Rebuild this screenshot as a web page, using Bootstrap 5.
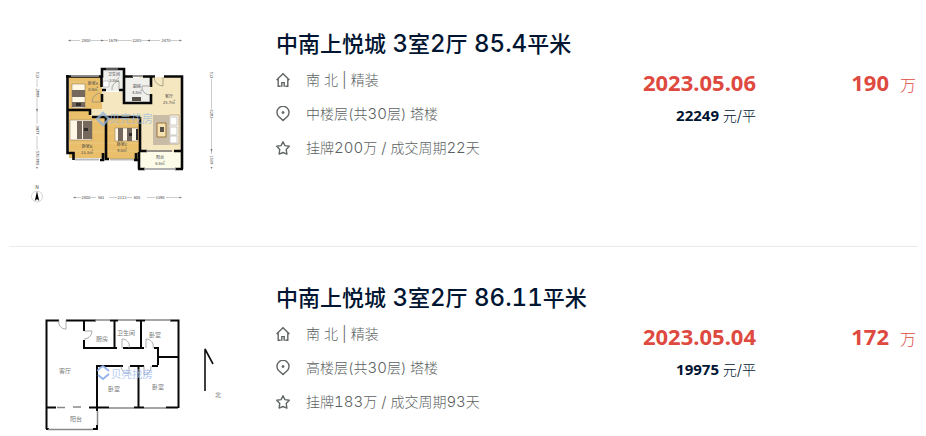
<!DOCTYPE html>
<html lang="zh-CN">
<head>
<meta charset="utf-8">
<meta name="viewport" content="width=device-width, initial-scale=1">
<title>中南上悦城 成交记录</title>
<link href="https://cdn.jsdelivr.net/npm/bootstrap@5.3.0/dist/css/bootstrap.min.css" rel="stylesheet">
<style>
  body { font-family: Inter, "Noto Sans CJK SC", sans-serif; font-variant-numeric: tabular-nums; color: #001532; background: #fff; }
  .deals { padding: 0 8px 0 9px; }
  .deal { padding: 36px 0; border-bottom: 1px solid #ebebeb; }
  .deal:first-child { padding-top: 29px; }
  .deal:last-child { padding-bottom: 0; border-bottom: 0; }
  .plan { width: 240px; margin-right: 27px; }
  .plan svg { display: block; width: 100%; }
  .plan text { font-family: "Noto Sans CJK SC", sans-serif; text-anchor: middle; fill: #444; }
  .plan .outline-names text { fill: #777; }
  .deal-title { font-size: 22px; line-height: 30px; height: 30px; font-weight: 500; }
  .deal-title a { color: inherit; }
  .deal-title span { font-size: 24px; }
  .facts { font-size: 14px; line-height: 34px; color: #5b5f5f; font-weight: 300; }
  .facts li { gap: 16px; height: 34px; }
  .facts li span { font-size: 15px; }
  .facts svg { width: 14px; height: 16px; fill: none; stroke: #626666; stroke-width: 1.4; }
  .closing, .total { padding-top: 36px; color: #de4a3f; line-height: 34px; }
  .figure-big { font-family: "Noto Sans", sans-serif; font-size: 22px; font-weight: 700; }
  .unit-price { font-size: 14px; line-height: 32px; color: #001532; font-weight: 300; }
  .unit-price b { font-family: "Noto Sans", sans-serif; font-size: 15px; font-weight: 700; }
  .unit-price span { font-size: 15px; }
  .total { width: 160px; font-size: 16px; font-weight: 300; }
  .total b { margin-right: 11px; }
  .closing, .total { position: relative; margin-right: 0; }
  .deal { padding-right: 2px; }
</style>
<script src="https://cdn.jsdelivr.net/npm/bootstrap@5.3.0/dist/js/bootstrap.bundle.min.js" defer></script>
</head>
<body>
<svg class="d-none" aria-hidden="true">
  <symbol id="i-home" viewBox="0 0 14 16"><path d="M.6 8 7 1.700 13.400 8M2.200 6.600v7.700h2.500M11.800 6.600v7.700H9.300M5.800 14.800v-4.200h2.400v4.200"/></symbol>
  <symbol id="i-pin" viewBox="0 0 14 16"><path d="M7 14.600 2.400 10.200a6 6 0 1 1 9.200 0Z"/><circle cx="7" cy="6.500" r="1" fill="#626666" stroke-width="1"/></symbol>
  <symbol id="i-star" viewBox="0 0 14 16"><path d="m7 1.700 1.900 3.900 4.400.7-3.100 3.100.7 4.700L7 12.500l-3.900 1.600.7-4.700L.7 6.300l4.400-.7Z" stroke-linejoin="round"/></symbol>
</svg>
<main class="deals">
  <article class="deal d-flex align-items-start">
    <a class="plan flex-shrink-0" href="#" aria-label="三室两厅户型图">
      <svg viewBox="9 29 240 181">
        <!-- floors -->
        <path fill="#f5e7c0" d="M89 92h50v-15h43v75h-42v-35H90z"/>
        <path fill="#e9bf6c" d="M69 77h33v32H69zM69 111h21v5h15v42H69zM107 118h32v41h-32z"/>
        <path fill="#efefec" d="M103 70h20v21h-20zM125 78h25v24h-25z"/>
        <path fill="#fcfce9" d="M140 152h42v17h-42z"/>
        <path stroke="#f0d292" stroke-width=".6" d="M69 82h33M69 89h33M69 97h19M69 104h19M69 121h36M69 132h36M69 143h36M69 151h36M107 124h32M107 133h32M107 143h32M107 151h32"/>
        <!-- beds, sofa and fixtures -->
        <path fill="#fff8e7" stroke="#9c8568" stroke-width=".6" d="M72 84h13v24H72zM70 120h22v20H70zM115 128h23v13h-23zM169 115h10v29h-10z"/>
        <path fill="#75695d" d="M72 90h13v7H72zM72 102h13v5H72zM77 121h5v18h-5zM83 121h9v18h-9zM118 128h5v13h-5zM127 128h5v13h-5z"/>
        <path fill="#302d2c" d="M76 103h5v3h-5zM84 128h4v3h-4zM129 133h3v3h-3zM136 129h2v11h-2z"/>
        <path fill="#c9bca6" d="M153 115h16v30h-16z"/>
        <path fill="#f4e2b1" stroke="#9b743e" stroke-width="1" d="M157 123h9v14h-9z"/>
        <path fill="#59524b" d="M160 127h4v5h-4zM132 97h9v4h-9z"/>
        <path fill="#fff" stroke="#aaa" stroke-width=".6" d="M103 81h6v6h-6zM170 117h7v8h-7zM170 127h7v8h-7zM170 136h7v7h-7z"/>
        <!-- walls -->
        <path fill="none" stroke="#080808" stroke-width="2.600" d="M67.500 75v78h6v7M66 76.500h36V69h22v7M124 69v34h27V94M151 87V77M133 76.500h-9M143 76.500h12M164 76.500h18V169M67 110h23v5M101.500 76v11M102 94v8M102 90h4M119 90h5M92 117h48M106 117v35M100 160h3v-7M106 152v7h3M140 117v35M136 160v-7M139 152v17M134 160h5M140 151h7M174 151h8M138 169h7M175 169h8"/>
        <path stroke="#777" stroke-width="1.600" d="M71 76h28M106 69h12M132 76h11M75 159.500h24M110 159.500h24M146 151h26M144 169h32"/>
        <path stroke="#fff" stroke-width=".5" d="M71 76h28M75 159.500h24M110 159.500h24M144 169h32"/>
        <path fill="none" stroke="#8c8c80" stroke-width=".7" d="M101 93a9 9 0 0 0-9 9h9M112 90a8 8 0 0 1 7-9v9M151 86h-9a8 8 0 0 0 8 9M154 77a9 9 0 0 0 9 9v-9"/>
        <!-- agency stamp -->
        <path fill="none" stroke="#91b4d9" stroke-width="2.500" opacity=".75" d="m97 119 6-6 6 6-6 6Z"/>
        <text x="131" y="123" font-size="11" style="fill:#9abce0" opacity=".75">贝壳找房</text>
        <!-- room names -->
        <g font-size="4">
          <text x="93" y="85">卧室A</text><text x="93" y="91">8.9㎡</text>
          <text x="114" y="76">卫生间</text><text x="114" y="82">3.8㎡</text>
          <text x="137" y="88">厨房</text><text x="137" y="94">4.8㎡</text>
          <text x="169" y="98">客厅</text><text x="169" y="104">25.7㎡</text>
          <text x="87" y="148">卧室B</text><text x="87" y="154">13.3㎡</text>
          <text x="122" y="146">卧室C</text><text x="122" y="152">9.8㎡</text>
          <text x="160" y="159">阳台</text><text x="160" y="165">6.8㎡</text>
        </g>
        <!-- dimensions -->
        <path fill="none" stroke="#999" stroke-width=".5" d="M69 40.500h11M91 40.500h17M118 40.500h14M142 40.500h18M171 40.500h9M74 197.500h7M91 197.500h5M109 197.500h8M127 197.500h5M147 197.500h8M166 197.500h14M37 79v8M37 98v26M37 136v14M211.500 79v30M211.500 119v35"/>
        <path fill="#777" d="m68 40.500 2.500-1v2zM182 40.500l-2.500-1v2zM73 197.500l2.500-1v2zM182 197.500l-2.500-1v2zM101 39.500l3 1-3 1zM150 39.500l-3 1 3 1zM36 109h2l-1 3zM36 167h2l-1 2zM210.500 167h2l-1 2zM210.500 149h2l-1 3z"/>
        <g font-size="4">
          <text x="86" y="42">2800</text><text x="113" y="42">1679</text><text x="137" y="42">2205</text><text x="166" y="42">2470</text>
          <text x="86" y="199">2800</text><text x="101" y="199">561</text><text x="122" y="199">2113</text><text x="137" y="199">605</text><text x="160" y="199">3398</text>
          <text transform="translate(36 75) rotate(90)">513</text><text transform="translate(36 93) rotate(90)">2888</text><text transform="translate(36 130) rotate(90)">3477</text><text transform="translate(36 158) rotate(90)">576 889</text>
          <text transform="translate(210 75) rotate(90)">513</text><text transform="translate(210 114) rotate(90)">6283</text><text transform="translate(210 160) rotate(90)">1508</text>
          <text x="37" y="189" font-size="5">N</text>
        </g>
        <circle cx="37" cy="196.500" r="5.500" fill="#fff" stroke="#bbb" stroke-width=".6"/><path d="m37 191 2.200 10-2.200-2-2.200 2z"/>
      </svg>
    </a>
    <div class="flex-grow-1">
      <h2 class="deal-title mb-1"><a class="text-decoration-none" href="#">中南上悦城<span> 3</span>室<span>2</span>厅<span> 85.4</span>平米</a></h2>
      <ul class="facts list-unstyled mb-0">
        <li class="d-flex align-items-center"><svg aria-hidden="true"><use href="#i-home"/></svg><div>南<span> </span>北<span> | </span>精装</div></li>
        <li class="d-flex align-items-center"><svg aria-hidden="true"><use href="#i-pin"/></svg><div>中楼层(共<span>30</span>层) 塔楼</div></li>
        <li class="d-flex align-items-center"><svg aria-hidden="true"><use href="#i-star"/></svg><div>挂牌<span>200</span>万<span> / </span>成交周期<span>22</span>天</div></li>
      </ul>
    </div>
    <div class="closing text-end">
      <div class="figure-big">2023.05.06</div>
      <div class="unit-price"><b>22249</b> 元<span>/</span>平</div>
    </div>
    <div class="total text-end"><b class="figure-big">190</b>万</div>
  </article>

  <article class="deal d-flex align-items-start">
    <a class="plan flex-shrink-0" href="#" aria-label="三室两厅户型图">
      <svg viewBox="9 283 240 150">
        <path fill="none" stroke="#080808" stroke-width="2" d="M59 320.500H46.500V429M66 320.500h30M110 320.500h8M136 320.500h9M170 320.500h8.500V408M84 321v10M84 340v8h33M114.500 320v28M123 348h21M141 321v27M154 348h4v17M158 357h20M97 408v-42h26M130 366h14M152 366h6M138.500 366v42M97 407.500h12M134 407.500h10M166 407.500h12M46 407.500h10M89 407.500h8V411M46 429h3M93 429h4v-4"/>
        <path fill="none" stroke="#888" stroke-width="1.500" d="M95 320h15M118 320h18M145 320h26M109 408h25M144 408h22M57 407.500h8M73 407h8M97.500 411v14M48 429.500h45"/>
        <path fill="none" stroke="#888" stroke-width=".7" d="M59 320a7 7 0 0 0 7 9v-9M84 331h8a8 8 0 0 1-8 8M122 348v-9a7 7 0 0 1 7 9M146 348v-9a7 7 0 0 1 7 9M121 366a8 8 0 0 0 8 8v-8M144 366v9a8 8 0 0 0 7-9"/>
        <path fill="none" stroke="#91b2eb" stroke-width="1.800" d="m97.500 371 2.500-3 3-2 6 5M109 374l-6 5-5-4"/>
        <text x="132" y="378" font-size="10.500" style="fill:#a9c1f1" opacity=".85">贝壳找房</text>
        <g class="outline-names" font-size="6">
          <text x="102" y="341">厨房</text><text x="126" y="335">卫生间</text><text x="155" y="337">卧室</text>
          <text x="65" y="373">客厅</text><text x="114" y="391">卧室</text><text x="158" y="389">卧室</text>
          <text x="76" y="421">阳台</text><text x="218" y="397">北</text>
        </g>
        <path fill="none" stroke="#111" stroke-width="1.600" d="M205 391v-42l8 15"/>
      </svg>
    </a>
    <div class="flex-grow-1">
      <h2 class="deal-title mb-1"><a class="text-decoration-none" href="#">中南上悦城<span> 3</span>室<span>2</span>厅<span> 86.11</span>平米</a></h2>
      <ul class="facts list-unstyled mb-0">
        <li class="d-flex align-items-center"><svg aria-hidden="true"><use href="#i-home"/></svg><div>南<span> </span>北<span> | </span>精装</div></li>
        <li class="d-flex align-items-center"><svg aria-hidden="true"><use href="#i-pin"/></svg><div>高楼层(共<span>30</span>层) 塔楼</div></li>
        <li class="d-flex align-items-center"><svg aria-hidden="true"><use href="#i-star"/></svg><div>挂牌<span>183</span>万<span> / </span>成交周期<span>93</span>天</div></li>
      </ul>
    </div>
    <div class="closing text-end">
      <div class="figure-big">2023.05.04</div>
      <div class="unit-price"><b>19975</b> 元<span>/</span>平</div>
    </div>
    <div class="total text-end"><b class="figure-big">172</b>万</div>
  </article>
</main>
</body>
</html>
